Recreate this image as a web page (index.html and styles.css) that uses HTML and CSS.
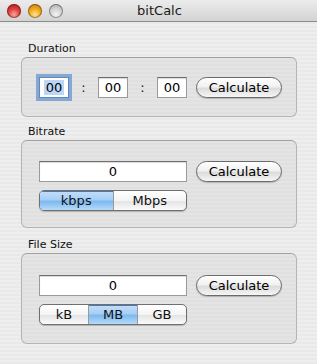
FILE: index.html
```html
<!DOCTYPE html>
<html lang="en">
<head>
    <meta charset="UTF-8">
    <meta name="viewport" content="width=device-width, initial-scale=1.0">
    <title>bitCalc</title>
    <link rel="stylesheet" href="styles.css">
</head>
<body>
    <div class="window">
        <div class="titlebar">
            <div class="lights">
                <span class="light red"></span>
                <span class="light yellow"></span>
                <span class="light gray"></span>
            </div>
            <div class="title">bitCalc</div>
        </div>

        <div class="content">
            <div class="group">
                <div class="group-label">Duration</div>
                <div class="box box-duration">
                    <div class="row">
                        <input class="field small focus" type="text" value="00">
                        <span class="colon">:</span>
                        <input class="field small" type="text" value="00">
                        <span class="colon">:</span>
                        <input class="field small" type="text" value="00">
                        <button class="pill">Calculate</button>
                    </div>
                </div>
            </div>

            <div class="group">
                <div class="group-label">Bitrate</div>
                <div class="box">
                    <div class="row">
                        <input class="field wide" type="text" value="0">
                        <button class="pill">Calculate</button>
                    </div>
                    <div class="segmented">
                        <span class="seg selected">kbps</span>
                        <span class="seg">Mbps</span>
                    </div>
                </div>
            </div>

            <div class="group">
                <div class="group-label">File Size</div>
                <div class="box box-size">
                    <div class="row">
                        <input class="field wide" type="text" value="0">
                        <button class="pill">Calculate</button>
                    </div>
                    <div class="segmented">
                        <span class="seg">kB</span>
                        <span class="seg selected">MB</span>
                        <span class="seg">GB</span>
                    </div>
                </div>
            </div>
        </div>
    </div>
</body>
</html>
```

FILE: styles.css
```css
body {
    margin: 0;
    font-family: "DejaVu Sans", "Lucida Grande", sans-serif;
    color: #111;
}
.window {
    width: 317px;
    height: 364px;
    background: repeating-linear-gradient(#eeeeee 0 2px, #e9e9e9 2px 4px);
    overflow: hidden;
}
.titlebar {
    height: 21px;
    border-bottom: 1px solid #8c8c8c;
    background: linear-gradient(#ececec, #d3d3d3);
    position: relative;
    display: flex;
    align-items: center;
    justify-content: center;
}
.lights {
    position: absolute;
    left: 7px;
    top: 4px;
    display: flex;
    gap: 7px;
}
.light {
    width: 14px;
    height: 14px;
    border-radius: 50%;
    box-shadow: inset 0 0 0 1px rgba(0, 0, 0, 0.35);
}
.light.red {
    background: radial-gradient(circle at 50% 75%, #f7a7a0 0, #e0403a 45%, #a8161a 100%);
}
.light.yellow {
    background: radial-gradient(circle at 50% 75%, #fde59a 0, #f3a81c 45%, #b86e08 100%);
}
.light.gray {
    background: radial-gradient(circle at 50% 75%, #f4f4f4 0, #cfcfcf 50%, #9c9c9c 100%);
}
.title {
    font-size: 13px;
    color: #1a1a1a;
    padding-left: 2px;
}
.content {
    padding: 20px 20px 0 21px;
}
.group {
    margin-bottom: 8px;
}
.group:nth-child(2) {
    margin-bottom: 10px;
}
.group-label {
    font-size: 11px;
    line-height: 14px;
    margin-left: 7px;
    margin-bottom: 1px;
}
.box {
    border: 1px solid #b4b4b4;
    border-top-color: #a0a0a0;
    border-radius: 6px;
    background: repeating-linear-gradient(#e4e4e4 0 2px, #e0e0e0 2px 4px);
    padding: 20px 14px 16px 17px;
}
.box-duration {
    padding: 19px 14px 18px 17px;
}
.box-size {
    padding: 21px 14px 18px 17px;
}
.row {
    display: flex;
    align-items: center;
}
.field {
    height: 21px;
    box-sizing: border-box;
    border: 1px solid #9a9a9a;
    border-top-color: #6e6e6e;
    background: #fff;
    box-shadow: inset 0 1px 1px rgba(0, 0, 0, 0.15);
    font-family: "DejaVu Sans", sans-serif;
    font-size: 13px;
    text-align: center;
    padding: 0;
    margin: 0;
    color: #000;
}
.field.small {
    width: 30px;
}
.field.focus {
    width: 30px;
    color: #000;
    box-shadow: 0 0 0 3px #86a9d4;
    border-color: #5f88bc;
    background: linear-gradient(#bcd6f6, #bcd6f6) center / 20px 15px no-repeat, #fff;
}
.field.wide {
    width: 148px;
}
.colon {
    width: 29px;
    text-align: center;
    font-size: 13px;
}
.pill {
    margin-left: 9px;
    width: 86px;
    height: 21px;
    border: 1px solid #6a6a6a;
    border-radius: 11px;
    background: linear-gradient(#ffffff 0%, #f1f1f1 45%, #dcdcdc 55%, #f6f6f6 100%);
    font-family: "DejaVu Sans", sans-serif;
    font-size: 13px;
    color: #000;
    padding: 0;
    box-shadow: 0 1px 1px rgba(0, 0, 0, 0.2);
}
.segmented {
    margin-top: 8px;
    width: 148px;
    height: 21px;
    box-sizing: border-box;
    display: flex;
    border: 1px solid #6f6f6f;
    border-radius: 5px;
    overflow: hidden;
    background: linear-gradient(#ffffff 0%, #f5f5f5 50%, #e4e4e4 55%, #fbfbfb 100%);
    box-shadow: 0 1px 1px rgba(0, 0, 0, 0.2);
}
.seg {
    flex: 1;
    display: flex;
    align-items: center;
    justify-content: center;
    font-size: 13px;
    border-left: 1px solid #9a9a9a;
}
.seg:first-child {
    border-left: none;
}
.seg.selected {
    background: linear-gradient(#c3defa 0%, #a6cff6 45%, #7db9f0 55%, #b6daf9 100%);
    box-shadow: inset 0 1px 0 #4f78a8;
}
```
